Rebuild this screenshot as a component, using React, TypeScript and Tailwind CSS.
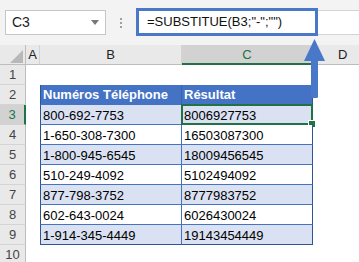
import React from "react";

const rows: [string, string][] = [
  ["800-692-7753", "8006927753"],
  ["1-650-308-7300", "16503087300"],
  ["1-800-945-6545", "18009456545"],
  ["510-249-4092", "5102494092"],
  ["877-798-3752", "8777983752"],
  ["602-643-0024", "6026430024"],
  ["1-914-345-4449", "19143454449"],
];

function RowHeader({ n }: { n: number }) {
  if (n === 3) {
    return (
      <div className="bg-[#d2d2d2] text-[#217346] border-r-2 border-r-[#217346] border-b border-b-[#d4d4d4] flex items-center justify-center text-[13px] pt-[1px]">
        {n}
      </div>
    );
  }
  return (
    <div className="bg-[#e9e9e9] text-[#444444] border-r border-r-[#bdbdbd] border-b border-b-[#d4d4d4] flex items-center justify-center text-[13px] pt-[1px]">
      {n}
    </div>
  );
}

export default function App() {
  const gridRows: React.ReactNode[] = [];
  for (let n = 1; n <= 10; n++) {
    gridRows.push(<RowHeader key={`h${n}`} n={n} />);
    gridRows.push(<div key={`a${n}`} className="bg-white" />);
    if (n === 2) {
      gridRows.push(
        <div key={`b${n}`} className="bg-[#4472c4] text-white font-bold border-l border-l-[#2f5597] border-r border-r-[#3a63ad] border-b border-b-[#4472c4] flex items-center pl-[2px] pt-[1px] text-[13px] whitespace-nowrap">
          Numéros Téléphone
        </div>
      );
      gridRows.push(
        <div key={`c${n}`} className="bg-[#4472c4] text-white font-bold border-r border-r-[#2f5597] border-b border-b-[#4472c4] flex items-center pl-[2px] pt-[1px] text-[13px] whitespace-nowrap">
          Résultat
        </div>
      );
    } else if (n >= 3 && n <= 9) {
      const [b, c] = rows[n - 3];
      const shaded = n % 2 === 1;
      const last = n === 9;
      gridRows.push(
        <div
          key={`b${n}`}
          className={
            (shaded ? "bg-[#d9e1f2] " : "bg-white ") +
            (last ? "border-b border-b-[#2f5597] " : "border-b border-b-[#4472c4] ") +
            "border-l border-l-[#2f5597] border-r border-r-[#4472c4] flex items-center pl-[2px] pt-[2px] text-[13px] text-black whitespace-nowrap"
          }
        >
          {b}
        </div>
      );
      gridRows.push(
        <div
          key={`c${n}`}
          className={
            (shaded ? "bg-[#d9e1f2] " : "bg-white ") +
            (last ? "border-b border-b-[#2f5597] " : "border-b border-b-[#4472c4] ") +
            "relative border-r border-r-[#2f5597] flex items-center pl-[2px] pt-[2px] text-[13px] text-black whitespace-nowrap"
          }
        >
          {c}
          {n === 3 && (
            <>
              <div className="absolute -left-[1px] -top-[1px] -right-[1px] -bottom-[1px] border-2 border-[#217346]" />
              <div className="absolute -right-[3px] -bottom-[3px] w-[6px] h-[6px] bg-[#217346] outline outline-1 outline-white" />
            </>
          )}
        </div>
      );
    } else {
      gridRows.push(<div key={`b${n}`} className="bg-white" />);
      gridRows.push(<div key={`c${n}`} className="bg-white" />);
    }
    gridRows.push(<div key={`d${n}`} className="bg-white" />);
  }

  return (
    <div className="relative w-[359px] h-[262px] overflow-hidden bg-white font-['Liberation_Sans',Arial,sans-serif]">
      {/* Formula bar */}
      <div className="h-[45px] bg-[#f3f3f3] flex items-start pt-[8px]">
        <div className="ml-[5px] mt-[2px] w-[101px] h-[25px] bg-white border border-[#c6c6c6] flex items-center justify-between pl-[6px] pr-[6px]">
          <span className="text-[14px] text-[#222222]">C3</span>
          <svg width="8" height="5" viewBox="0 0 8 5">
            <polygon points="0,0 8,0 4,5" fill="#777777" />
          </svg>
        </div>
        <div className="w-[30px] h-[28px] flex flex-col items-center justify-center gap-[2px] mt-[1px]">
          <div className="w-[2px] h-[2px] bg-[#a0a0a0]" />
          <div className="w-[2px] h-[2px] bg-[#a0a0a0]" />
          <div className="w-[2px] h-[2px] bg-[#a0a0a0]" />
        </div>
        <div className="flex-1 flex items-center h-[28px]">
          <div className="w-[182px] h-[28px] border-[3px] border-[#4a78c8] bg-white flex items-center pl-[8px] text-[13px] text-[#111111] whitespace-nowrap">
            =SUBSTITUE(B3;"-";"")
          </div>
          <div className="flex-1 h-[25px] bg-white border-y border-[#d4d4d4]" />
        </div>
      </div>

      {/* Sheet grid */}
      <div className="grid grid-cols-[26px_14px_142px_131px_1fr] grid-rows-[repeat(11,20px)]">
        <div className="bg-[#e9e9e9] border-r border-r-[#bdbdbd] border-b border-b-[#bdbdbd] relative">
          <svg className="absolute left-0 top-0" width="26" height="20" viewBox="0 0 26 20">
            <polygon points="10,18 23,18 23,5" fill="#b8b8b8" />
          </svg>
        </div>
        <div className="bg-[#e9e9e9] border-r border-r-[#d4d4d4] border-b border-b-[#bdbdbd] flex items-center justify-center text-[13px] text-[#222222] pt-[1px]">A</div>
        <div className="bg-[#e9e9e9] border-r border-r-[#d4d4d4] border-b border-b-[#bdbdbd] flex items-center justify-center text-[13px] text-[#222222] pt-[1px]">B</div>
        <div className="bg-[#d2d2d2] border-r border-r-[#d4d4d4] border-b-2 border-b-[#217346] flex items-center justify-center text-[13px] text-[#217346] pt-[2px]">C</div>
        <div className="bg-[#e9e9e9] border-b border-b-[#bdbdbd] flex items-center pl-[25px] text-[13px] text-[#222222] pt-[1px]">D</div>
        {gridRows}
      </div>

      {/* Arrow overlay */}
      <svg className="absolute left-0 top-0 pointer-events-none" width="359" height="262" viewBox="0 0 359 262">
        <rect x="311" y="58" width="7" height="40" rx="1.5" fill="#4a78c8" />
        <polygon points="304,61 325,61 314.5,39" fill="#4a78c8" />
      </svg>
    </div>
  );
}
